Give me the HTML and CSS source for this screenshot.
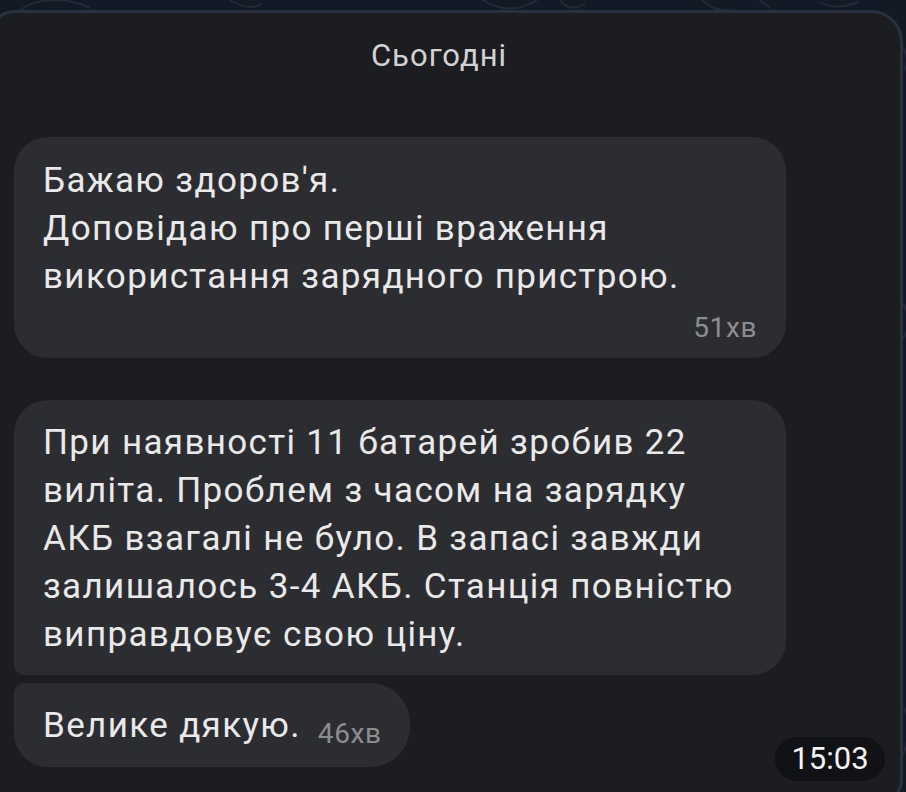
FILE: index.html
```html
<!DOCTYPE html>
<html lang="uk">
<head>
<meta charset="utf-8">
<title>Chat</title>
<link rel="stylesheet" href="styles.css">
</head>
<body>
<svg class="doodles" width="906" height="792" viewBox="0 0 906 792" aria-hidden="true">
  <g fill="none" stroke="#222a38" stroke-width="2">
    <path d="M20 10 C 40 -4, 70 -2, 90 8"/>
    <path d="M230 0 C 240 6, 250 10, 262 4"/>
    <path d="M480 -2 C 500 12, 520 12, 540 -2"/>
    <path d="M560 0 C 565 8, 575 10, 585 4"/>
    <path d="M700 -2 C 710 8, 720 12, 735 10"/>
    <path d="M760 0 L 770 8"/>
    <path d="M820 2 C 830 8, 845 8, 858 2"/>
    <path d="M895 40 C 905 45, 910 60, 904 70"/>
    <path d="M900 300 C 910 310, 910 330, 902 340"/>
    <path d="M898 700 C 910 710, 912 740, 900 760"/>
  </g>
</svg>
<div class="panel">
  <div class="date">Сьогодні</div>
  <div class="msgs">
    <div class="bubble wide first">
      <p class="text">Бажаю здоров'я.<br>Доповідаю про перші враження<br>використання зарядного пристрою.</p>
      <div class="time-row"><span class="time">51хв</span></div>
    </div>
    <div class="bubble wide second">
      <p class="text">При наявності 11 батарей зробив 22<br>виліта. Проблем з часом на зарядку<br>АКБ взагалі не було. В запасі завжди<br>залишалось 3-4 АКБ. Станція повністю<br>виправдовує свою ціну.</p>
    </div>
    <div class="bubble short third">
      <p class="text">Велике дякую.<span class="time inline">46хв</span></p>
    </div>
  </div>
  <div class="pill">15:03</div>
</div>
</body>
</html>
```
FILE: styles.css
```css
html, body {
  margin: 0;
  padding: 0;
  background: #131a25;
  overflow: hidden;
  height: 792px;
}
body {
  position: relative;
  font-family: "Roboto", "Noto Sans", "Liberation Sans", sans-serif;
}
.doodles {
  position: absolute;
  left: 0;
  top: 0;
  z-index: 0;
}
.panel {
  position: relative;
  z-index: 1;
  margin: 10px 3px 0 -16px;
  height: 800px;
  box-sizing: border-box;
  border: 3px solid #283041;
  border-radius: 32px;
  background: #1c1d21;
  padding-left: 27px;
}
.date {
  padding-top: 25px;
  height: 36px;
  line-height: 36px;
  font-size: 31px;
  letter-spacing: 1px;
  color: #d2d2d4;
  text-align: center;
  padding-right: 36px;
}
.msgs {
  display: flex;
  flex-direction: column;
  align-items: flex-start;
  margin-top: 63px;
}
.bubble {
  box-sizing: border-box;
  background: #2c2d31;
  color: #e9e9ea;
  border-radius: 34px;
}
.text {
  margin: 0;
  font-size: 35px;
  letter-spacing: 1.35px;
  line-height: 48px;
}
.wide {
  width: 772px;
}
.first {
  padding: 20px 29px 14px;
}
.time-row {
  display: flex;
  justify-content: flex-end;
  margin-top: 11px;
}
.time {
  font-size: 28px;
  letter-spacing: 0.6px;
  line-height: 32px;
  color: #8c8d91;
}
.second {
  margin-top: 42px;
  padding: 19px 29px 16px;
  border-bottom-left-radius: 10px;
}
.third {
  margin-top: 8px;
  padding: 19px 28px 17px 29px;
  border-radius: 10px 40px 40px 34px;
}
.time.inline {
  display: inline-block;
  margin-left: 17px;
  letter-spacing: 0.6px;
  vertical-align: -6px;
}
.pill {
  position: absolute;
  right: 15px;
  bottom: 26px;
  width: 110px;
  height: 44px;
  border-radius: 22px;
  background: #111215;
  color: #f4f4f5;
  font-size: 31px;
  line-height: 44px;
  text-align: center;
}
```
